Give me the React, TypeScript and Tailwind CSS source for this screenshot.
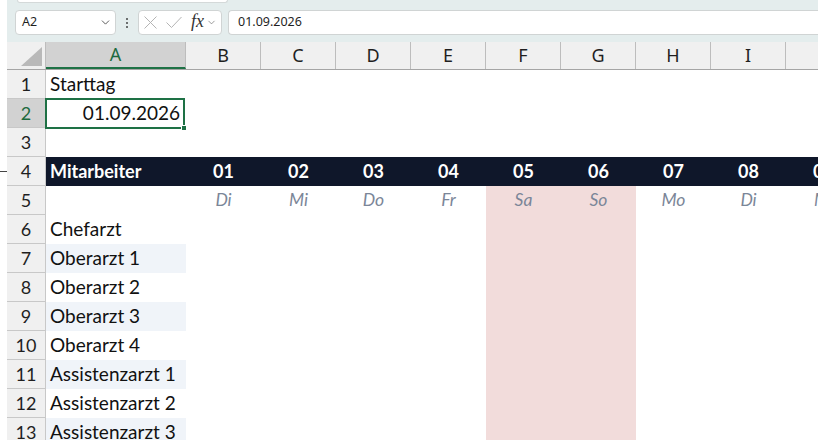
import { ChevronDown } from "lucide-react";

const colLetters = ["A", "B", "C", "D", "E", "F", "G", "H", "I", "J"];
const days = ["01", "02", "03", "04", "05", "06", "07", "08", "09"];
const weekdays = ["Di", "Mi", "Do", "Fr", "Sa", "So", "Mo", "Di", "Mi"];
const staff = [
  "Chefarzt",
  "Oberarzt 1",
  "Oberarzt 2",
  "Oberarzt 3",
  "Oberarzt 4",
  "Assistenzarzt 1",
  "Assistenzarzt 2",
  "Assistenzarzt 3",
];

// weekend columns (index in days) get the pink fill
const isWeekend = (i: number) => i === 4 || i === 5;

function RowHead({ n, active }: { n: number; active?: boolean }) {
  return (
    <div
      className={`w-[39px] shrink-0 h-full flex items-center justify-center border-r border-b border-[#c8c8c8] text-[18px] ${
        active ? "bg-[#d2d2d2] text-[#1e6b3e]" : "bg-[#f0f0f0] text-[#1f1f1f]"
      }`}
    >
      {n}
    </div>
  );
}

function DayCells() {
  return (
    <>
      {days.map((d, i) => (
        <div key={d} className={`w-[75px] shrink-0 h-full ${isWeekend(i) ? "bg-[#f2dcdb]" : ""}`} />
      ))}
    </>
  );
}

export default function App() {
  return (
    <div className="w-[818px] h-[440px] overflow-hidden bg-white flex font-[Lato,'Noto_Sans',sans-serif]">
      {/* outline gutter */}
      <div className="w-[7px] shrink-0 flex flex-col">
        <div className="h-[171px]" />
        <div className="h-px bg-[#444]" />
      </div>

      <div className="flex-1 min-w-0 flex flex-col">
        {/* formula bar */}
        <div className="h-[42px] shrink-0 bg-[#e4eded] flex flex-col">
          <div className="h-[3px] ml-[10px] w-[211px] bg-white border-b border-x border-[#d4d9d9] rounded-b-[3px]" />
          <div className="h-[25px] mt-[7px] flex items-stretch font-['Noto_Sans',sans-serif] text-[12.5px] text-[#1f1f1f]">
            <div className="ml-[8px] w-[101px] bg-white border border-[#d0d4d4] rounded-[4px] flex items-center justify-between pl-[6px] pr-[3px]">
              <span>A2</span>
              <ChevronDown size={13} strokeWidth={1.6} className="text-[#444]" />
            </div>
            <div className="w-[22px] flex items-center justify-center">
              <div className="flex flex-col gap-[2px]">
                <span className="w-[2px] h-[2px] bg-[#444] rounded-full" />
                <span className="w-[2px] h-[2px] bg-[#444] rounded-full" />
                <span className="w-[2px] h-[2px] bg-[#444] rounded-full" />
              </div>
            </div>
            <div className="w-[84px] bg-white border border-[#d0d4d4] rounded-[4px] flex items-center pl-[4px]">
              <svg width="13" height="13" viewBox="0 0 13 13" className="ml-[1px]">
                <path d="M0.5 0.5 12.5 12.5M12.5 0.5 0.5 12.5" stroke="#b4b4b4" strokeWidth="1" fill="none" />
              </svg>
              <svg width="16" height="13" viewBox="0 0 16 13" className="ml-[9px]">
                <path d="M0.5 6.5 5.5 11.5 15.5 1" stroke="#b4b4b4" strokeWidth="1" fill="none" />
              </svg>
              <span className="ml-[9px] font-['Liberation_Serif',serif] italic text-[18px] text-[#333] -mt-[2px] flex items-center">
                fx
                <ChevronDown size={11} strokeWidth={1.6} className="text-[#777] ml-[2px] mt-[2px]" />
              </span>
            </div>
            <div className="ml-[6px] flex-1 bg-white border border-[#d0d4d4] rounded-l-[4px] border-r-0 flex items-center pl-[9px]">
              01.09.2026
            </div>
          </div>
        </div>

        {/* column headings */}
        <div className="h-[28px] shrink-0 flex bg-[#f0f0f0] border-b border-[#a5a5a5] text-[18px] text-[#1f1f1f] font-['Noto_Sans',sans-serif]">
          <div className="w-[39px] shrink-0 border-r border-[#bdbdbd] flex items-end justify-end p-[3px]">
            <svg width="21" height="19" viewBox="0 0 21 19">
              <polygon points="0,19 21,19 21,0" fill="#b9b9b9" />
            </svg>
          </div>
          {colLetters.map((c, i) => (
            <div
              key={c}
              className={`shrink-0 flex items-center justify-center border-r border-[#bdbdbd] ${
                i === 0 ? "w-[140px] bg-[#d2d2d2] text-[#1e6b3e] border-b-2 border-b-[#1e7145]" : "w-[75px]"
              }`}
            >
              {c}
            </div>
          ))}
        </div>

        {/* rows */}
        <div className="flex flex-col text-[19px] text-[#111]">
          <div className="h-[29px] flex">
            <RowHead n={1} />
            <div className="w-[140px] shrink-0 flex items-center px-[4px]">Starttag</div>
          </div>
          <div className="h-[29px] flex">
            <RowHead n={2} active />
            <div className="w-[140px] shrink-0 relative border-2 border-[#1e7145] -ml-px -mt-px h-[31px] flex items-center justify-end pr-[3px]">
              01.09.2026
              <span className="absolute -right-[4px] -bottom-[4px] w-[6px] h-[6px] bg-[#1e7145] border border-white" />
            </div>
          </div>
          <div className="h-[29px] flex">
            <RowHead n={3} />
          </div>
          <div className="h-[29px] flex">
            <RowHead n={4} />
            <div className="flex-1 bg-[#0f172a] flex items-center text-white font-bold text-[18px]">
              <div className="w-[140px] shrink-0 px-[4px]">Mitarbeiter</div>
              {days.map((d) => (
                <div key={d} className="w-[75px] shrink-0 text-center">
                  {d}
                </div>
              ))}
            </div>
          </div>
          <div className="h-[29px] flex">
            <RowHead n={5} />
            <div className="w-[140px] shrink-0" />
            {weekdays.map((w, i) => (
              <div
                key={i}
                className={`w-[75px] shrink-0 h-full flex items-center justify-center italic text-[17.5px] text-[#7b8698] ${
                  isWeekend(i) ? "bg-[#f2dcdb]" : ""
                }`}
              >
                {w}
              </div>
            ))}
          </div>
          {staff.map((s, k) => (
            <div key={s} className="h-[29px] flex">
              <RowHead n={6 + k} />
              <div className={`w-[140px] shrink-0 h-full flex items-center px-[4px] ${k % 2 === 1 ? "bg-[#f0f4f9]" : ""}`}>
                {s}
              </div>
              <DayCells />
            </div>
          ))}
        </div>
      </div>
    </div>
  );
}
